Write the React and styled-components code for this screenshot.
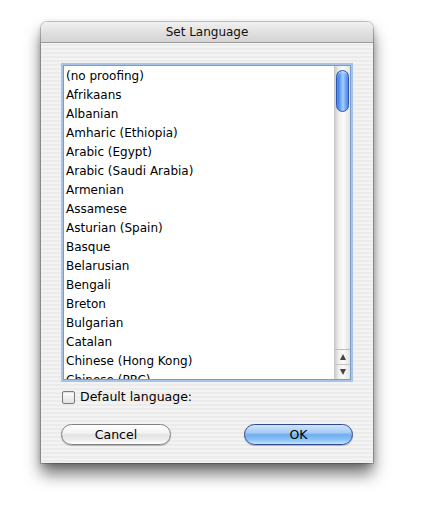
import React, { useState } from "react";
import styled, { createGlobalStyle } from "styled-components";

// only the rows that fit in the visible part of the list
const languages = [
  "(no proofing)",
  "Afrikaans",
  "Albanian",
  "Amharic (Ethiopia)",
  "Arabic (Egypt)",
  "Arabic (Saudi Arabia)",
  "Armenian",
  "Assamese",
  "Asturian (Spain)",
  "Basque",
  "Belarusian",
  "Bengali",
  "Breton",
  "Bulgarian",
  "Catalan",
  "Chinese (Hong Kong)",
  "Chinese (PRC)",
];

const GlobalStyle = createGlobalStyle`
  html, body {
    margin: 0;
    background: #ffffff;
  }
  body {
    font-family: "DejaVu Sans", "Liberation Sans", sans-serif;
    font-size: 12px;
    color: #000;
  }
`;

const Page = styled.div`
  padding: 22px 0 0 41px;
  height: 507px;
  box-sizing: border-box;
`;

const Window = styled.div`
  width: 332px;
  height: 441px;
  display: flex;
  flex-direction: column;
  border-radius: 6px 6px 0 0;
  overflow: hidden;
  background: repeating-linear-gradient(
    to bottom,
    #f3f3f3 0px,
    #f3f3f3 2px,
    #ebebeb 2px,
    #ebebeb 4px
  );
  box-shadow: 0 0 0 1px rgba(0, 0, 0, 0.2), 0 11px 16px rgba(0, 0, 0, 0.55),
    0 2px 6px rgba(0, 0, 0, 0.2);
`;

const TitleBar = styled.div`
  height: 20px;
  flex: none;
  display: flex;
  align-items: center;
  justify-content: center;
  background: linear-gradient(to bottom, #f1f1f1, #dedede 60%, #d4d4d4);
  border-bottom: 1px solid #9c9c9c;
  font-size: 12px;
  color: #111;
`;

const Body = styled.div`
  flex: 1;
  display: flex;
  flex-direction: column;
  padding: 20px 20px 0 20px;
`;

const ListBox = styled.div`
  height: 319px;
  flex: none;
  box-sizing: border-box;
  display: flex;
  background: #fff;
  border: 2px solid #a6c3e8;
  box-shadow: inset 0 0 0 1px #7d9bc7;
  padding: 1px;
`;

const Rows = styled.div`
  flex: 1;
  overflow: hidden;
  padding-top: 1px;
`;

const Row = styled.div`
  height: 19px;
  line-height: 19px;
  padding-left: 2px;
  white-space: nowrap;
  color: #000;
`;

const ScrollBar = styled.div`
  width: 15px;
  flex: none;
  display: flex;
  flex-direction: column;
  border-left: 1px solid #c9c9c9;
  background: linear-gradient(
    to right,
    #cfcfcf,
    #eeeeee 25%,
    #fbfbfb 55%,
    #e2e2e2 100%
  );
`;

const Track = styled.div`
  flex: 1;
  padding: 4px 1px 0 1px;
  border-bottom: 1px solid #bdbdbd;
`;

const Thumb = styled.div`
  height: 40px;
  border-radius: 7px;
  border: 1px solid #2b58b0;
  background: linear-gradient(
    to right,
    #2c6be0 0%,
    #5d9cf5 25%,
    #a9cffb 55%,
    #5e9bf2 85%,
    #2d66d8 100%
  );
  box-shadow: inset 0 1px 2px rgba(255, 255, 255, 0.6);
`;

const Arrow = styled.div`
  height: 14px;
  display: flex;
  align-items: center;
  justify-content: center;
  border-bottom: ${(p) => (p.$last ? "none" : "1px solid #c4c4c4")};
  &::after {
    content: "";
    border-left: 3.5px solid transparent;
    border-right: 3.5px solid transparent;
    ${(p) =>
      p.$up
        ? "border-bottom: 6px solid #444;"
        : "border-top: 6px solid #444;"}
  }
`;

const CheckRow = styled.label`
  display: flex;
  align-items: center;
  gap: 5px;
  margin-top: 7px;
  margin-left: 1px;
  line-height: 16px;
  font-size: 12.5px;
`;

const Check = styled.span`
  width: 11px;
  height: 11px;
  flex: none;
  border: 1px solid #7b7b7b;
  border-radius: 2px;
  background: ${(p) =>
    p.$on
      ? "linear-gradient(to bottom, #cfe4fb, #6eaeef 55%, #a9d3fb)"
      : "linear-gradient(to bottom, #ffffff, #f0f0f0 50%, #e2e2e2)"};
  box-shadow: inset 0 1px 1px rgba(0, 0, 0, 0.12);
`;

const ButtonRow = styled.div`
  display: flex;
  justify-content: space-between;
  margin-top: 19px;
`;

const Button = styled.button`
  width: ${(p) => (p.$primary ? "109px" : "110px")};
  height: 21px;
  padding: 0;
  line-height: 19px;
  border-radius: 11px;
  font-family: inherit;
  font-size: 12.5px;
  color: #000;
  border: 1px solid ${(p) => (p.$primary ? "#32488e" : "#7f7f7f")};
  background: ${(p) =>
    p.$primary
      ? "linear-gradient(to bottom, #cfe4fb 0%, #a5cbf5 40%, #6eaeef 52%, #8fc5f8 80%, #c6e6fe 100%)"
      : "linear-gradient(to bottom, #ffffff 0%, #f4f4f4 40%, #e3e3e3 52%, #eeeeee 80%, #ffffff 100%)"};
  box-shadow: 0 1px 1px rgba(0, 0, 0, 0.25);
`;

export default function App() {
  const [checked, setChecked] = useState(false);
  return (
    <Page>
      <GlobalStyle />
      <Window>
        <TitleBar>Set Language</TitleBar>
        <Body>
          <ListBox>
            <Rows>
              {languages.map((l) => (
                <Row key={l}>{l}</Row>
              ))}
            </Rows>
            <ScrollBar>
              <Track>
                <Thumb />
              </Track>
              <Arrow $up />
              <Arrow $last />
            </ScrollBar>
          </ListBox>
          <CheckRow onClick={() => setChecked(!checked)}>
            <Check $on={checked} />
            Default language:
          </CheckRow>
          <ButtonRow>
            <Button>Cancel</Button>
            <Button $primary>OK</Button>
          </ButtonRow>
        </Body>
      </Window>
    </Page>
  );
}
